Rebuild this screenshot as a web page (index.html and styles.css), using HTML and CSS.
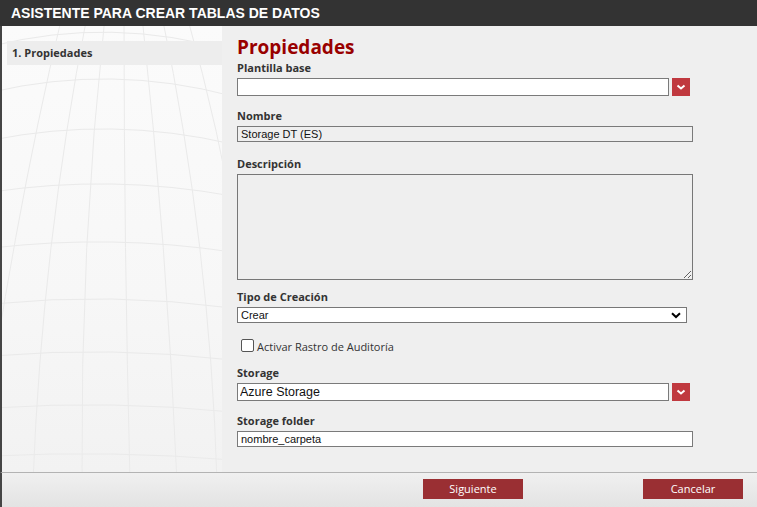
FILE: index.html
```html
<!DOCTYPE html>
<html lang="es">
<head>
<meta charset="utf-8">
<title>Asistente para crear tablas de datos</title>
<link rel="stylesheet" href="styles.css">
</head>
<body>
<div class="window">
  <header class="titlebar">ASISTENTE PARA CREAR TABLAS DE DATOS</header>
  <div class="main">
    <aside class="sidebar">
      <svg class="globe" viewBox="0 0 220 446" preserveAspectRatio="none" aria-hidden="true">
        <g fill="none" stroke="#eaeaea" stroke-width="1">
          <path d="M 60 -10 Q 10 200 -25 456"/>
          <path d="M 85 -10 Q 40 220 31 456"/>
          <path d="M 103 -10 Q 78 220 80 456"/>
          <path d="M 122 -10 Q 122 220 128 456"/>
          <path d="M 140 -10 Q 165 220 175 456"/>
          <path d="M 160 -10 Q 208 220 215 456"/>
          <path d="M 185 -10 Q 250 220 262 456"/>
          <path d="M -10 20 Q 110 -10 230 25"/>
          <path d="M -10 66 Q 110 38 230 70"/>
          <path d="M -10 114 Q 110 90 230 118"/>
          <path d="M -10 166 Q 110 148 230 170"/>
          <path d="M -10 222 Q 110 208 230 226"/>
          <path d="M -10 278 Q 110 266 230 282"/>
          <path d="M -10 330 Q 110 320 230 334"/>
          <path d="M -10 382 Q 110 374 230 386"/>
          <path d="M -10 430 Q 110 424 230 434"/>
        </g>
      </svg>
      <nav class="steps">
        <div class="step">1. Propiedades</div>
      </nav>
    </aside>
    <section class="content">
      <h1 class="title">Propiedades</h1>

      <div class="field gap-13">
        <label class="label">Plantilla base</label>
        <div class="combo">
          <input class="input input-white input-tall combo-input" type="text" value="">
          <span class="dd-btn"><svg viewBox="0 0 18 18" width="18" height="18"><path d="M5.5 7.5 L9 10.5 L12.5 7.5" fill="none" stroke="#fff" stroke-width="2"/></svg></span>
        </div>
      </div>

      <div class="field gap-15">
        <label class="label">Nombre</label>
        <input class="input input-gray input-full" type="text" value="Storage DT (ES)" readonly>
      </div>

      <div class="field gap-10">
        <label class="label">Descripción</label>
        <textarea class="textarea"></textarea>
      </div>

      <div class="field">
        <label class="label">Tipo de Creación</label>
        <select class="select"><option>Crear</option></select>
      </div>

      <div class="check-row">
        <input class="check" type="checkbox" id="audit">
        <label class="check-label" for="audit">Activar Rastro de Auditoría</label>
      </div>

      <div class="field gap-13">
        <label class="label">Storage</label>
        <div class="combo">
          <input class="input input-white input-tall combo-input input-big" type="text" value="Azure Storage">
          <span class="dd-btn"><svg viewBox="0 0 18 18" width="18" height="18"><path d="M5.5 7.5 L9 10.5 L12.5 7.5" fill="none" stroke="#fff" stroke-width="2"/></svg></span>
        </div>
      </div>

      <div class="field">
        <label class="label">Storage folder</label>
        <input class="input input-white input-full" type="text" value="nombre_carpeta">
      </div>
    </section>
  </div>
  <footer class="footer">
    <button class="btn" type="button">Siguiente</button>
    <button class="btn" type="button">Cancelar</button>
  </footer>
</div>
</body>
</html>
```

FILE: styles.css
```css
* { box-sizing: border-box; }

html, body {
  margin: 0;
  padding: 0;
  background: #efefef;
}

body {
  font-family: "Open Sans", "DejaVu Sans", sans-serif;
  color: #333;
}

.window {
  width: 757px;
  height: 507px;
  display: flex;
  flex-direction: column;
  overflow: hidden;
}

.titlebar {
  height: 26px;
  flex: none;
  background: #333333;
  color: #ffffff;
  font-family: "Liberation Sans", Arial, sans-serif;
  font-weight: bold;
  font-size: 14px;
  line-height: 27px;
  padding-left: 11px;
}

.main {
  flex: 1;
  display: flex;
  border-left: 2px solid #454545;
  min-height: 0;
}

.sidebar {
  width: 220px;
  flex: none;
  position: relative;
  background: linear-gradient(#fbfbfb, #f7f7f7 60%, #f2f2f2);
  padding-top: 15px;
}

.globe {
  position: absolute;
  left: 0;
  top: 0;
  width: 100%;
  height: 100%;
}

.steps {
  position: relative;
  margin-left: 5px;
}

.step {
  height: 24px;
  background: #ededed;
  font-size: 11px;
  font-weight: bold;
  line-height: 24px;
  padding-left: 5px;
  color: #333;
}

.content {
  flex: 1;
  background: #efefef;
  padding: 9px 0 0 15px;
}

.title {
  margin: 0 0 2px 0;
  font-size: 19px;
  line-height: 24px;
  font-weight: bold;
  color: #990000;
}

.field { margin-bottom: 13px; }
.gap-13 { margin-bottom: 13px; }
.gap-15 { margin-bottom: 15px; }
.gap-10 { margin-bottom: 10px; }

.label {
  display: block;
  font-size: 11px;
  font-weight: bold;
  line-height: 14px;
  margin-bottom: 3px;
  color: #333;
}

.input {
  display: block;
  margin: 0;
  height: 16px;
  border: 1px solid #7a7a7a;
  padding: 0 3px;
  font-family: "Liberation Sans", Arial, sans-serif;
  font-size: 11px;
  color: #111;
  border-radius: 0;
  outline: none;
}

.input-white { background: #ffffff; }
.input-gray { background: #efefef; }
.input-full { width: 456px; }
.input-tall { height: 18px; }
.input-big { font-size: 12.5px; padding-left: 2px; }

.combo {
  display: flex;
  align-items: center;
  gap: 3px;
}

.combo-input { width: 432px; }

.dd-btn {
  width: 18px;
  height: 18px;
  background: #c0393f;
  display: block;
  flex: none;
}

.dd-btn svg { display: block; }

.textarea {
  display: block;
  margin: 0;
  width: 456px;
  height: 106px;
  border: 1px solid #777;
  background: #efefef;
  resize: both;
  font-family: "Liberation Sans", Arial, sans-serif;
  font-size: 11px;
  border-radius: 0;
}

.select {
  display: block;
  margin: 0;
  width: 450px;
  height: 16px;
  border: 1px solid #777;
  border-radius: 0;
  background-color: #ffffff;
  background-image: url("data:image/svg+xml;utf8,<svg xmlns='http://www.w3.org/2000/svg' width='10' height='7' viewBox='0 0 10 7'><path d='M1 1.2 L5 5 L9 1.2' fill='none' stroke='%23000' stroke-width='2'/></svg>");
  background-repeat: no-repeat;
  background-position: right 5px center;
  appearance: none;
  -webkit-appearance: none;
  padding: 0 3px;
  font-family: "Liberation Sans", Arial, sans-serif;
  font-size: 11px;
  line-height: 14px;
  color: #111;
}

.check-row {
  display: flex;
  align-items: center;
  margin: 15px 0 14px 4px;
  height: 14px;
}

.check {
  width: 13px;
  height: 13px;
  margin: 0 3px 0 0;
  appearance: none;
  -webkit-appearance: none;
  background: #fff;
  border: 1px solid #555;
  border-radius: 2px;
}

.check-label {
  font-size: 11px;
  line-height: 14px;
  color: #333;
  position: relative;
  top: 2px;
}

.footer {
  flex: none;
  height: 35px;
  border-top: 1px solid #b3b3b3;
  border-left: 2px solid #454545;
  background: linear-gradient(#f0f0f0, #e3e3e3);
  display: flex;
  justify-content: flex-end;
  align-items: flex-start;
  gap: 120px;
  padding: 6px 14px 0 0;
}

.btn {
  width: 100px;
  height: 20px;
  background: #9a2f33;
  color: #fff;
  border: none;
  border-radius: 0;
  font-family: "Open Sans", "DejaVu Sans", sans-serif;
  font-size: 11px;
  line-height: 20px;
  padding: 0;
  margin: 0;
}
```
